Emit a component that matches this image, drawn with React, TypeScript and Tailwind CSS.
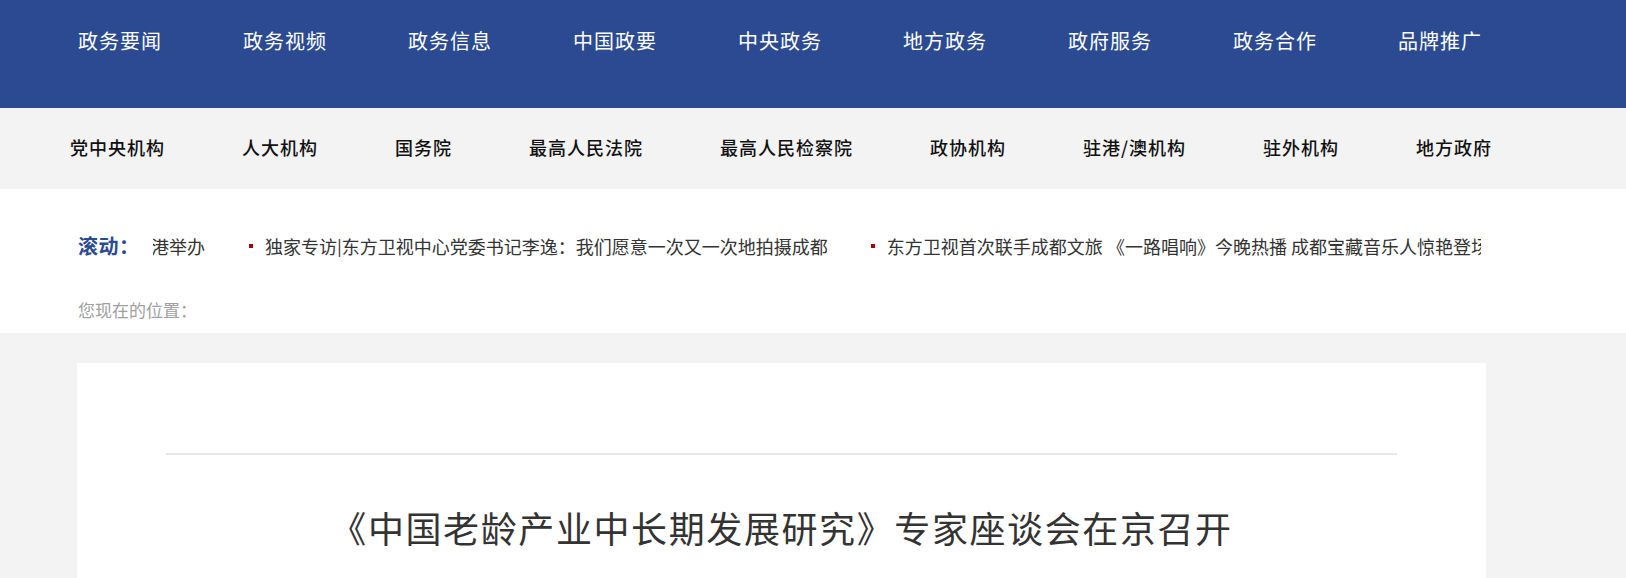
import React from "react";

const topNav = ["政务要闻", "政务视频", "政务信息", "中国政要", "中央政务", "地方政务", "政府服务", "政务合作", "品牌推广"];
const subNav = ["党中央机构", "人大机构", "国务院", "最高人民法院", "最高人民检察院", "政协机构", "驻港/澳机构", "驻外机构", "地方政府"];
const ticker = [
  "独家专访|东方卫视中心党委书记李逸：我们愿意一次又一次地拍摄成都",
  "东方卫视首次联手成都文旅 《一路唱响》今晚热播 成都宝藏音乐人惊艳登场",
];

const font = { fontFamily: '"Noto Sans CJK SC", "Noto Sans", sans-serif' };

export default function App() {
  return (
    <div className="w-[1626px] bg-white" style={font}>
      {/* top nav */}
      <div className="h-[108px] bg-[#2b4a92]">
        <div className="flex pl-[78px] pt-[31px]">
          {topNav.map((t) => (
            <div key={t} className="w-[165px] shrink-0 text-[20px] leading-[20px] tracking-[1px] text-white">
              {t}
            </div>
          ))}
        </div>
      </div>
      {/* sub nav */}
      <div className="flex h-[81px] items-center gap-[77px] bg-[#f3f3f3] pb-[4px] pl-[70px]">
        {subNav.map((t) => (
          <div key={t} className="shrink-0 text-[18px] font-medium leading-[20px] tracking-[1px] text-[#111]">
            {t}
          </div>
        ))}
      </div>
      {/* ticker + breadcrumb */}
      <div className="pl-[78px] pt-[46px] pb-[12px]">
        <div className="flex h-[22px] items-center">
          <div className="w-[75px] shrink-0 text-[20px] font-bold leading-[22px] tracking-[0.5px] text-[#2b4a92]">滚动：</div>
          <div className="flex w-[1328px] shrink-0 items-center overflow-hidden">
            <div className="ml-[-38px] flex shrink-0 items-center whitespace-nowrap">
              <span className="mr-[44px] text-[18px] leading-[22px] text-[#333]">在香港举办</span>
              {ticker.map((t) => (
                <div key={t} className="mr-[43px] flex shrink-0 items-center">
                  <span className="mr-[12px] h-[4px] w-[4px] bg-[#a80000]" />
                  <span className="text-[18px] leading-[22px] text-[#333]">{t}</span>
                </div>
              ))}
            </div>
          </div>
        </div>
        <div className="mt-[42px] text-[17px] leading-[22px] text-[#a0a0a0]">您现在的位置：</div>
      </div>
      {/* content */}
      <div className="bg-[#f3f3f3] pt-[30px] pl-[77px] pb-[40px]">
        <div className="w-[1409px] bg-white px-[89px] pt-[90px] pb-[80px]">
          <div className="h-[2px] bg-[#e8e8e8]" />
          <h1 className="mt-[50px] text-center text-[36px] leading-[44px] tracking-[1.6px] text-[#333]">
            《中国老龄产业中长期发展研究》专家座谈会在京召开
          </h1>
        </div>
      </div>
    </div>
  );
}
